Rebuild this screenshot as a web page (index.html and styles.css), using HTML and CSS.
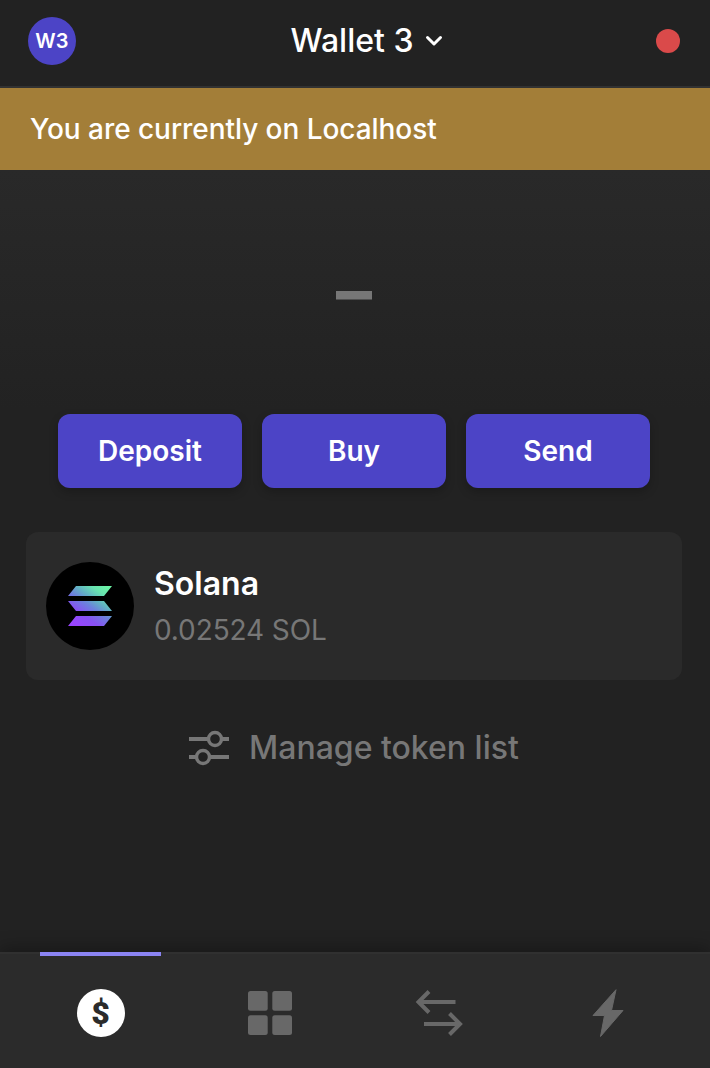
FILE: index.html
```html
<!DOCTYPE html>
<html lang="en">
<head>
<meta charset="utf-8">
<title>Wallet</title>
<link rel="stylesheet" href="styles.css">
</head>
<body>
<div class="app">
  <header class="header">
    <div class="avatar">W3</div>
    <div class="account"><span class="account-name">Wallet 3</span>
      <svg width="18" height="12" viewBox="0 0 18 12" fill="none" stroke="#fff" stroke-width="3" stroke-linecap="round" stroke-linejoin="round"><path d="M2.500 2.500 9 9l6.500-6.500"/></svg>
    </div>
    <div class="status"></div>
  </header>
  <div class="banner"><span class="banner-text">You are currently on Localhost</span></div>
  <main class="main">
    <div class="balance"><span class="balance-text">–</span></div>
    <div class="actions">
      <button class="action">Deposit</button>
      <button class="action">Buy</button>
      <button class="action">Send</button>
    </div>
    <div class="token">
      <div class="token-logo">
        <svg width="46" height="42" viewBox="0 0 46 42">
          <defs><linearGradient id="sol" gradientUnits="userSpaceOnUse" x1="7" y1="43" x2="38" y2="-1"><stop offset="0.08" stop-color="#9945ff"/><stop offset="0.3" stop-color="#8752f3"/><stop offset="0.5" stop-color="#6c80dd"/><stop offset="0.65" stop-color="#62b0c4"/><stop offset="0.82" stop-color="#68e2b0"/><stop offset="1" stop-color="#6cf5a5"/></linearGradient></defs>
          <path fill="url(#sol)" d="M9 1h36l-8 10H1zM1 16h36l8 10H9zM9 31h36l-8 10H1z"/>
        </svg>
      </div>
      <div class="token-info">
        <div class="token-name">Solana</div>
        <div class="token-amount">0.02524 SOL</div>
      </div>
    </div>
    <div class="manage">
      <svg width="40" height="36" viewBox="0 0 40 36" fill="none" stroke="#777" stroke-width="3.400"><path stroke-width="4" d="M0 9h19M33 9h7M0 27h7M21 27h19"/><circle cx="26" cy="9" r="6.500"/><circle cx="14" cy="27" r="6.500"/></svg>
      <span class="manage-text">Manage token list</span>
    </div>
  </main>
  <nav class="nav">
    <div class="tab active"><span class="coin">$</span></div>
    <div class="tab"><svg width="44" height="44" viewBox="0 0 44 44" fill="#686868"><rect width="19.700" height="19.700" rx="2.500"/><rect x="24.300" width="19.700" height="19.700" rx="2.500"/><rect y="24.300" width="19.700" height="19.700" rx="2.500"/><rect x="24.300" y="24.300" width="19.700" height="19.700" rx="2.500"/></svg></div>
    <div class="tab"><svg width="48" height="48" viewBox="0 0 48 48" fill="none" stroke="#686868" stroke-width="4"><path d="M40.500 13H3.500M14 2.500 3.500 13 14 23.500M9 35h36M34.500 24.500 45 35 34.500 45.500"/></svg></div>
    <div class="tab"><svg width="32" height="48" viewBox="0 0 32 48" fill="#686868" stroke="#686868" stroke-linejoin="round"><path d="M24 .7 1 26.500h11.500L8.500 47.500 31 21.500H19.500z"/></svg></div>
  </nav>
</div>
</body>
</html>
```
FILE: styles.css
```css
* { box-sizing: border-box; }
body { margin: 0; background: #222; font-family: Inter, "Liberation Sans", sans-serif; color: #fff; }
.app { width: 710px; height: 1068px; display: flex; flex-direction: column; overflow: hidden; }
svg { display: block; flex: none; }
span { white-space: nowrap; }
.header { height: 88px; flex: none; padding: 0 30px 4px 28px; border-bottom: 2px solid #323232; display: grid; grid-template-columns: 48px 1fr 24px; align-items: center; }
.avatar { width: 48px; height: 48px; border-radius: 50%; background: #4c44c6; display: flex; align-items: center; justify-content: center; font-size: 20px; font-weight: 600; letter-spacing: .2px; }
.account { display: flex; align-items: center; justify-content: center; gap: 12px; padding-left: 2px; }
.account-name { font-size: 32px; font-weight: 500; line-height: 40px; }
.status { width: 24px; height: 24px; border-radius: 50%; background: #da4a4a; }
.banner { height: 82px; flex: none; background: #a37e38; display: flex; align-items: center; padding-left: 30px; }
.banner-text { font-size: 28px; font-weight: 500; line-height: 34px; letter-spacing: -.05px; }
.main { flex: 1; background: linear-gradient(#292929, #222 240px); display: flex; flex-direction: column; }
.balance { height: 244px; flex: none; display: flex; justify-content: center; align-items: center; padding: 0 2px 2px 0; color: #777; }
.balance-text { font-size: 72px; font-weight: 700; line-height: 80px; }
.actions { display: grid; grid-template-columns: repeat(3, 184px); gap: 20px; padding-left: 58px; }
.action { height: 74px; border: 0; border-radius: 12px; background: #4c44c6; box-shadow: 0 4px 10px rgba(0, 0, 0, .22); color: #fff; font: 600 28px/34px Inter, "Liberation Sans", sans-serif; padding: 0; }
.token { height: 148px; margin: 44px 28px 0 26px; padding: 0 20px; border-radius: 12px; background: #2a2a2a; display: flex; align-items: center; gap: 20px; }
.token-logo { width: 88px; height: 88px; border-radius: 50%; background: #000; display: flex; align-items: center; justify-content: center; }
.token-name { font-size: 32px; line-height: 40px; font-weight: 600; }
.token-amount { font-size: 28px; line-height: 34px; margin: 9px 0 1px; letter-spacing: -.1px; color: #777; }
.manage { display: flex; align-items: center; gap: 20px; margin-top: 48px; padding-left: 189px; height: 40px; color: #777; }
.manage-text { font-size: 32px; line-height: 40px; font-weight: 500; }
.nav { height: 116px; flex: none; background: #2b2b2b; border-top: 2px solid #303030; box-shadow: 0 -4px 16px rgba(0, 0, 0, .3); display: grid; grid-template-columns: repeat(4, 169px); padding-left: 16px; position: relative; }
.tab { display: flex; align-items: center; justify-content: center; position: relative; padding-top: 4px; }
.active::before { content: ""; position: absolute; top: -2px; left: 24px; width: 121px; height: 4px; background: #8b84f3; }
.coin { width: 48px; height: 48px; border-radius: 50%; background: #fff; color: #2b2b2b; display: flex; align-items: center; justify-content: center; font: 900 32px/48px Roboto, sans-serif; }
```
